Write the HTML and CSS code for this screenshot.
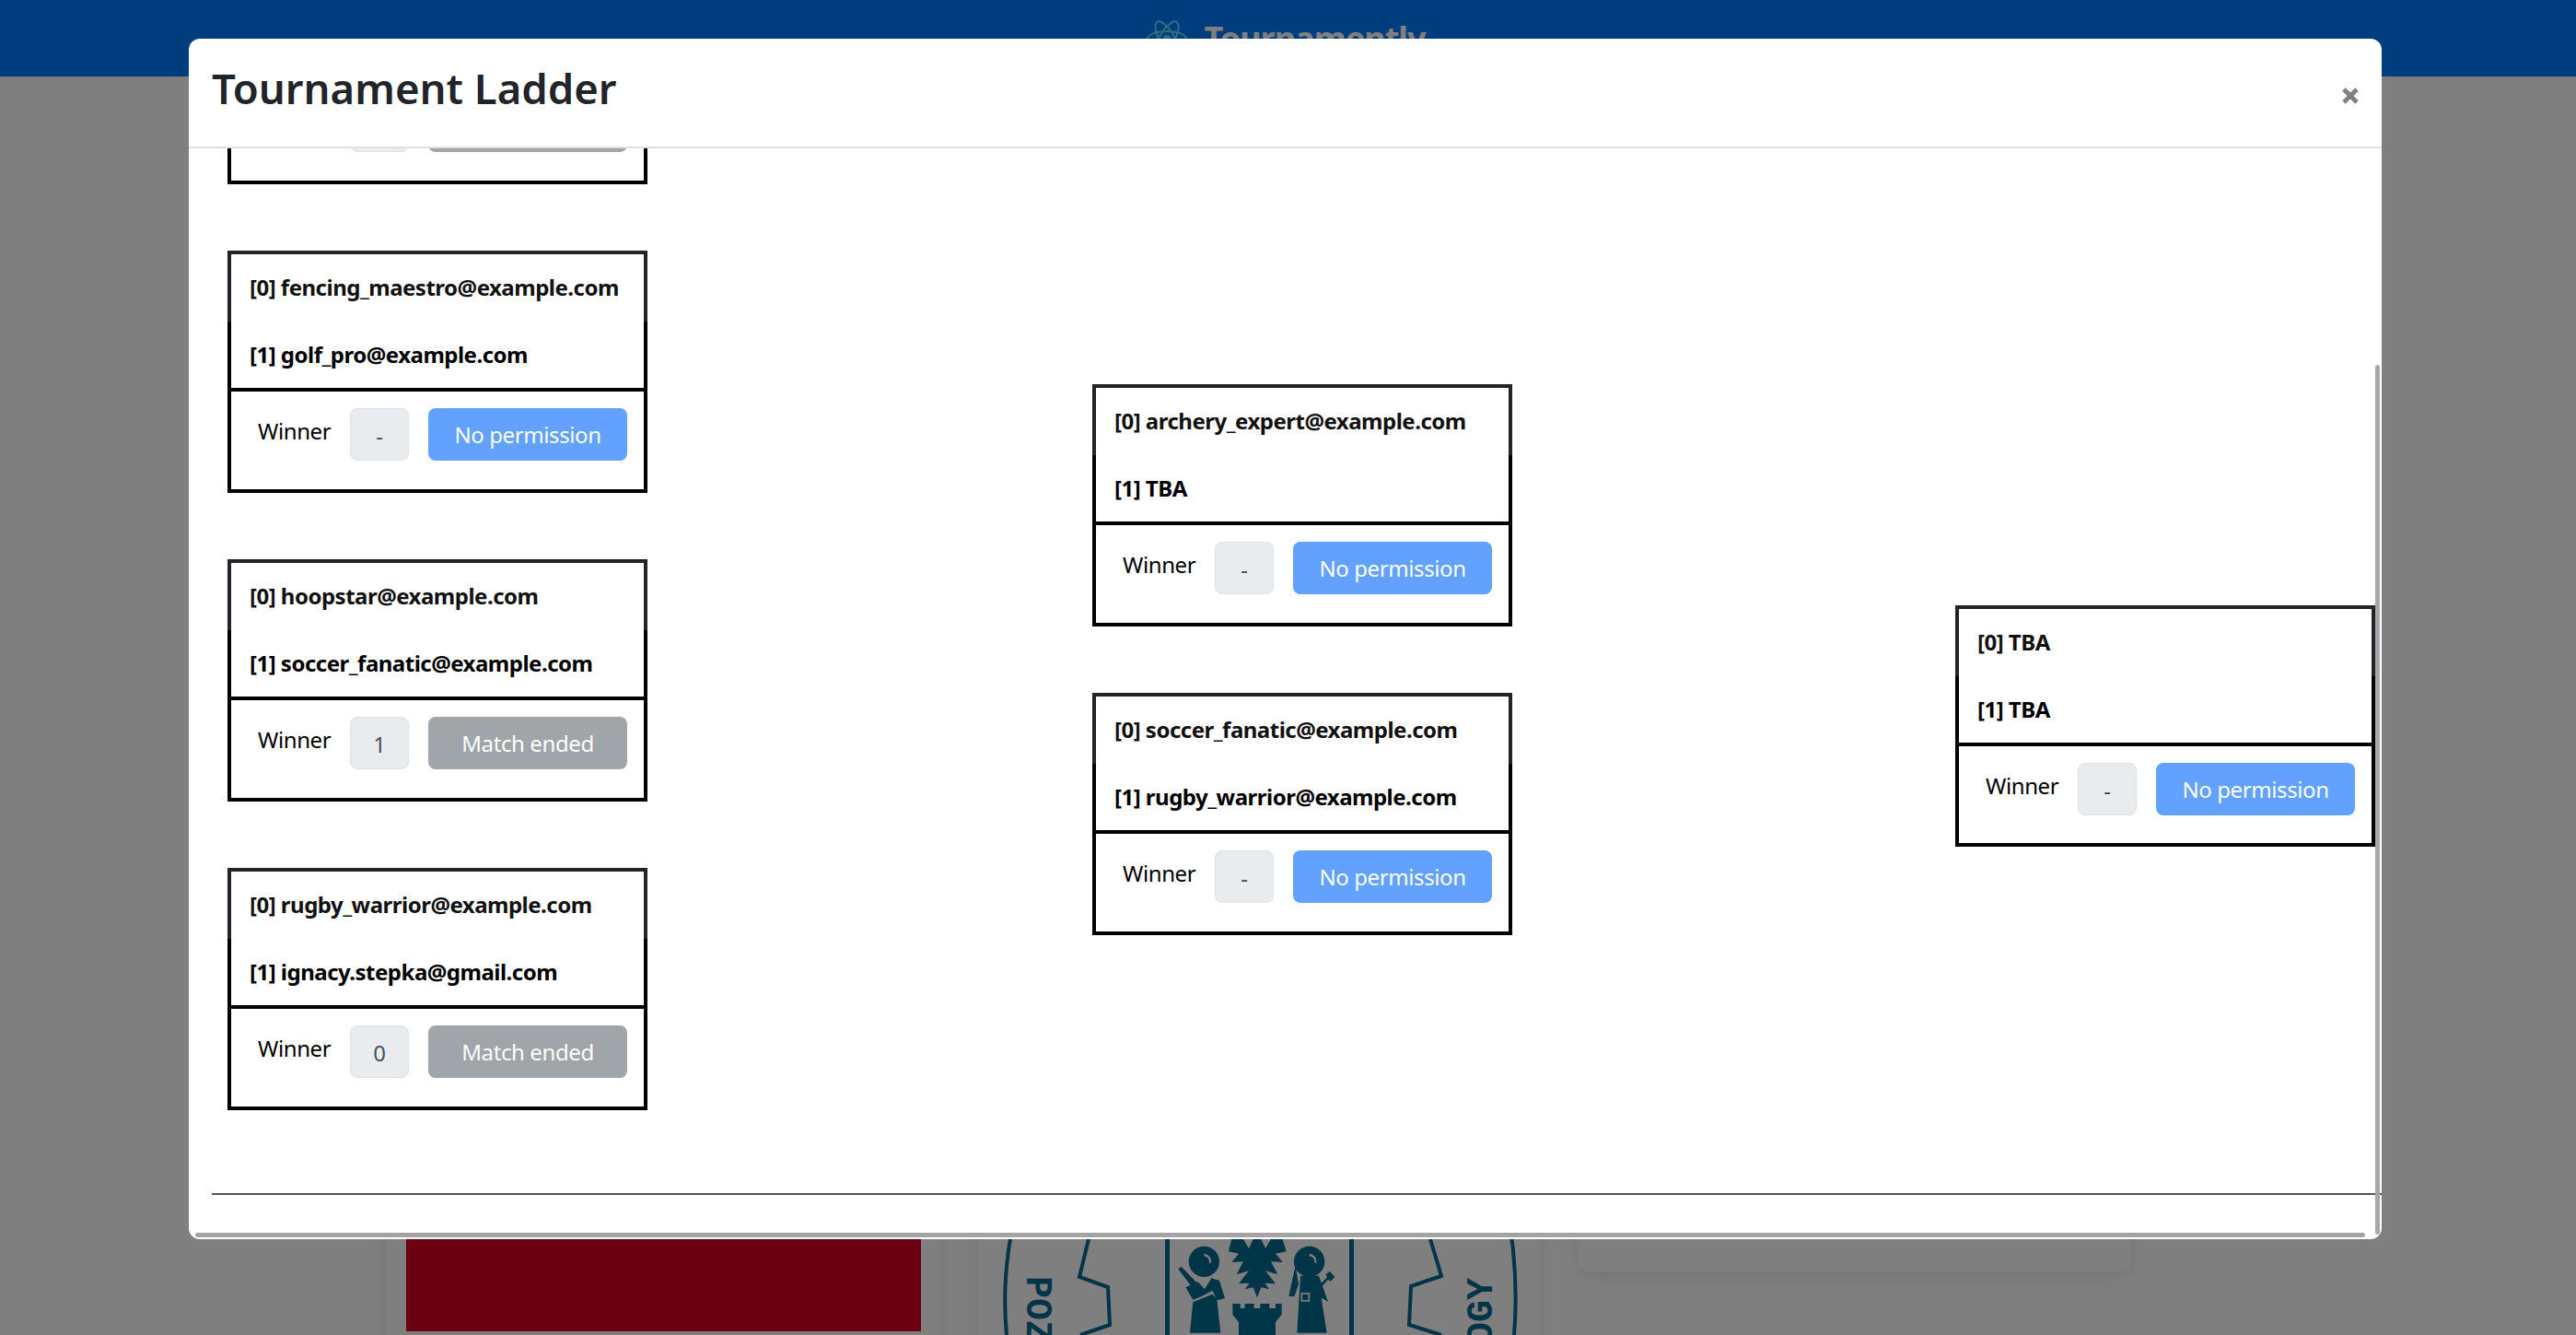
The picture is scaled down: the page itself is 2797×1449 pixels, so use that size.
FILE: index.html
```html
<!DOCTYPE html>
<html lang="en">

<head>
    <meta charset="UTF-8">
    <meta name="viewport" content="width=device-width, initial-scale=1.0">
    <title>Tournamently</title>
    <link rel="stylesheet" href="styles.css">
</head>

<body>
    <nav class="navbar">
        <svg class="brand-logo" viewBox="-22 -20 44 40" fill="none" stroke="#61dafb" stroke-width="2">
            <circle r="4" fill="#61dafb" stroke="none"></circle>
            <ellipse rx="21" ry="8"></ellipse>
            <ellipse rx="21" ry="8" transform="rotate(60)"></ellipse>
            <ellipse rx="21" ry="8" transform="rotate(120)"></ellipse>
        </svg>
        <span class="brand-name">Tournamently</span>
    </nav>

    <div class="cards">
        <div class="card card-red">
            <div class="card-image"></div>
        </div>
        <div class="card card-seal">
            <svg class="seal" viewBox="1062 1100 610 349">
                <g fill="none" stroke="#00688f" stroke-width="4">
                    <path d="M1107 1300 Q1086 1375 1093 1449"></path>
                    <path d="M1182 1345 L1172 1386 L1203 1397 L1205 1438 L1173 1449"></path>
                    <path d="M1634 1300 Q1650 1375 1644 1449"></path>
                    <path d="M1553 1345 L1565 1385 L1532 1396 L1530 1438 L1565 1449"></path>
                </g>
                <rect x="1265" y="1300" width="5" height="149" fill="#00688f"></rect>
                <rect x="1465" y="1300" width="5" height="149" fill="#00688f"></rect>
                <text class="seal-text" transform="translate(1115 1385) rotate(90)">POZ</text>
                <text class="seal-text" text-anchor="end" transform="translate(1620 1387) rotate(-90)">OGY</text>
                <g transform="translate(1250 1340) scale(0.3333)" fill="#00688f">
                    <!-- left saint -->
                    <circle cx="172" cy="88" r="50"></circle>
                    <path d="M172 66a22 22 0 0 1 20 26" fill="none" stroke="#fff" stroke-width="7"></path>
                    <path d="M88 112l10-8 50 52-16 14z"></path>
                    <path d="M112 172l40-18 22 24 22-36 26 8 18 58-26 6-14-32-34 18-30 12z"></path>
                    <path d="M136 220l64-26 14 16 12 110h-100z"></path>
                    <!-- eagle -->
                    <path d="M300 15L262 15L252 55L285 62L262 90L300 88L278 130L318 118L285 160L320 158L305 178L332 172L345 205L358 172L385 178L370 158L405 160L372 118L412 130L390 88L428 90L405 62L440 55L428 15L390 15L372 45L358 15L332 15L318 45Z"></path>
                    <!-- tower -->
                    <path d="M265 225h25v15h15v-15h30v15h20v-15h30v15h20v-15h20v35l-20 25v42h-120v-42l-20-25z"></path>
                    <!-- right saint -->
                    <circle cx="515" cy="88" r="50"></circle>
                    <path d="M515 66a22 22 0 0 1 20 26" fill="none" stroke="#fff" stroke-width="7"></path>
                    <path d="M470 100l-22 100 18 2 14-40z"></path>
                    <path d="M486 134h60l30 84-22-12 18 114h-97z"></path>
                    <path d="M530 184l44-46-6-8 14-10 16 18-14 14-8-6-40 46z"></path>
                    <rect x="490" y="192" width="24" height="24" fill="none" stroke="#fff" stroke-width="5"></rect>
                </g>
            </svg>
        </div>
        <div class="card card-blank"></div>
    </div>

    <div class="backdrop"></div>

    <div class="modal">
        <div class="modal-header">
            <h2 class="modal-title">Tournament Ladder</h2>
            <svg class="close" viewBox="0 0 18 18" stroke="#808080" stroke-width="5">
                <path d="M2 2L16 16M16 2L2 16"></path>
            </svg>
        </div>
        <div class="modal-body">
            <div class="ladder">
                <div class="round">
                    <!-- scrolled out of view, only the bottom edge shows -->
                    <div class="match">
                        <div class="player player-first"></div>
                        <div class="player player-second"></div>
                        <div class="match-result">
                            <span class="winner-label"></span>
                            <span class="winner-value"></span>
                            <span class="result-btn btn-ended"></span>
                        </div>
                    </div>
                    <div class="match">
                        <div class="player player-first">[0] fencing_maestro@example.com</div>
                        <div class="player player-second">[1] golf_pro@example.com</div>
                        <div class="match-result">
                            <span class="winner-label">Winner</span>
                            <span class="winner-value">-</span>
                            <span class="result-btn btn-none">No permission</span>
                        </div>
                    </div>
                    <div class="match">
                        <div class="player player-first">[0] hoopstar@example.com</div>
                        <div class="player player-second">[1] soccer_fanatic@example.com</div>
                        <div class="match-result">
                            <span class="winner-label">Winner</span>
                            <span class="winner-value">1</span>
                            <span class="result-btn btn-ended">Match ended</span>
                        </div>
                    </div>
                    <div class="match">
                        <div class="player player-first">[0] rugby_warrior@example.com</div>
                        <div class="player player-second">[1] ignacy.stepka@gmail.com</div>
                        <div class="match-result">
                            <span class="winner-label">Winner</span>
                            <span class="winner-value">0</span>
                            <span class="result-btn btn-ended">Match ended</span>
                        </div>
                    </div>
                </div>
                <div class="round round-semi">
                    <div class="match">
                        <div class="player player-first">[0] archery_expert@example.com</div>
                        <div class="player player-second">[1] TBA</div>
                        <div class="match-result">
                            <span class="winner-label">Winner</span>
                            <span class="winner-value">-</span>
                            <span class="result-btn btn-none">No permission</span>
                        </div>
                    </div>
                    <div class="match">
                        <div class="player player-first">[0] soccer_fanatic@example.com</div>
                        <div class="player player-second">[1] rugby_warrior@example.com</div>
                        <div class="match-result">
                            <span class="winner-label">Winner</span>
                            <span class="winner-value">-</span>
                            <span class="result-btn btn-none">No permission</span>
                        </div>
                    </div>
                </div>
                <div class="round round-final">
                    <div class="match">
                        <div class="player player-first">[0] TBA</div>
                        <div class="player player-second">[1] TBA</div>
                        <div class="match-result">
                            <span class="winner-label">Winner</span>
                            <span class="winner-value">-</span>
                            <span class="result-btn btn-none">No permission</span>
                        </div>
                    </div>
                </div>
            </div>
            <hr class="ladder-rule">
        </div>
        <div class="scroll-y"></div>
        <div class="scroll-x"></div>
    </div>
</body>

</html>
```

FILE: styles.css
```css
* {
    margin: 0;
    padding: 0;
    box-sizing: border-box;
}

body {
    font-family: 'Noto Sans', sans-serif;
    font-size: 24px;
    line-height: 36px;
    height: 1449px;
    overflow: hidden;
    background: #fff;
}

.navbar {
    height: 83px;
    background: #007bff;
    display: flex;
    justify-content: center;
    align-items: center;
    gap: 18px;
    padding-right: 4px;
}

.brand-logo {
    width: 44px;
    height: 40px;
}

.brand-name {
    color: #fff;
    font-size: 36px;
    font-weight: 700;
    letter-spacing: -1px;
}

.cards {
    display: flex;
    align-items: flex-start;
    gap: 42px;
    padding: 617px 0 0 419px;
}

.card {
    width: 601px;
    background: #fff;
    border-radius: 12px;
    box-shadow: 0 6px 20px rgba(0, 0, 0, 0.08);
}

.card-red {
    height: 800px;
    padding: 20px 20px 20px 22px;
}

.card-image {
    height: 725px;
    background: #d40024;
}

.card-seal {
    width: 610px;
    height: 800px;
    padding-top: 400px;
}

.seal {
    display: block;
    width: 610px;
    height: 349px;
}

.seal-text {
    font-family: 'Liberation Mono', monospace;
    font-size: 40px;
    font-weight: 700;
    fill: #00688f;
}

.card-blank {
    height: 680px;
    width: 600px;
}

.backdrop {
    position: fixed;
    inset: 0;
    background: rgba(0, 0, 0, 0.5);
}

.modal {
    position: fixed;
    left: 205px;
    top: 42px;
    width: 2381px;
    height: 1303px;
    background: #fff;
    border-radius: 12px;
    overflow: hidden;
    color: #000;
}

.modal-header {
    height: 119px;
    border-bottom: 2px solid #dee2e6;
    display: flex;
    justify-content: space-between;
    align-items: flex-start;
    padding: 23px 25px 0;
}

.modal-title {
    font-size: 45.5px;
    line-height: 60px;
    font-weight: 600;
    color: #212529;
}

.close {
    width: 18px;
    height: 18px;
    margin-top: 30px;
    margin-right: 0;
}

.modal-body {
    padding-left: 25px;
    height: 1184px;
    overflow: hidden;
}

.ladder {
    display: flex;
    align-items: flex-start;
    gap: 483px;
    height: 1358px;
    margin-top: -224px;
    padding-left: 17px;
}

.round {
    display: flex;
    flex-direction: column;
    gap: 72px;
    width: 456px;
    flex: none;
}

.round-semi {
    margin-top: 480px;
}

.round-final {
    margin-top: 720px;
    margin-left: -2px;
}

.round-final .match-result {
    height: 113px;
}

.player {
    height: 72px;
    padding: 18px 20px 0;
    font-weight: 700;
    white-space: nowrap;
    letter-spacing: -0.5px;
}

.player-first {
    border: 4px solid #212529;
    border-bottom: none;
    height: 77px;
    padding-top: 18px;
    color: #111;
}

.player-second {
    border-left: 4px solid #000;
    border-right: 4px solid #000;
}

.match-result {
    height: 114px;
    border: 4px solid #000;
    display: flex;
    align-items: flex-start;
    padding: 18px 18px 0 29px;
}

.winner-label {
    width: 78px;
    margin-right: 22px;
    padding-top: 7px;
    letter-spacing: -0.4px;
}

.winner-value {
    width: 64px;
    height: 57px;
    margin-right: 21px;
    text-align: center;
    line-height: 57px;
    color: #495057;
    background: #e9ecef;
    border: 1px solid #dee2e6;
    border-radius: 8px;
}

.result-btn {
    width: 216px;
    height: 57px;
    text-align: center;
    line-height: 57px;
    color: #fff;
    border-radius: 8px;
    letter-spacing: -0.4px;
}

.btn-none {
    background: #62a1fe;
}

.btn-ended {
    background: #a0a5aa;
}

.ladder-rule {
    border: none;
    height: 2px;
    background: #555;
    margin-top: 0;
}

.scroll-y {
    position: absolute;
    left: 2374px;
    top: 354px;
    width: 5px;
    height: 944px;
    border-radius: 3px;
    background: #a8a8a8;
}

.scroll-x {
    position: absolute;
    left: 7px;
    top: 1296px;
    width: 2356px;
    height: 5px;
    border-radius: 3px;
    background: #a3a3a3;
}
```
